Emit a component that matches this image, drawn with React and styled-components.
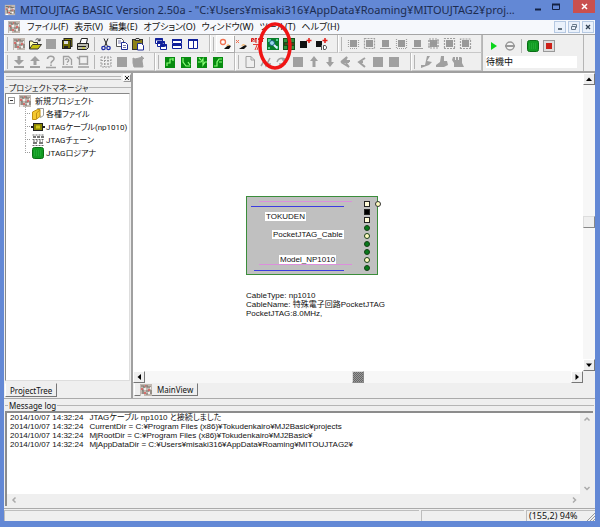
import React from "react";
import styled, { createGlobalStyle, css } from "styled-components";

const blue = "#6388d5";
const face = "#efefef";
const gothic = '"Liberation Sans", "Noto Sans CJK JP", sans-serif';
const ui = '"Noto Sans", "Noto Sans CJK JP", sans-serif';
const narrow = 'Roboto, "Noto Sans CJK JP", sans-serif';

const GlobalStyle = createGlobalStyle`
  *, *::before, *::after { box-sizing: border-box; }
  body { margin: 0; background: ${blue}; }
  button, input { font: inherit; color: inherit; border: 0; padding: 0; margin: 0; background: none; }
  ul, p { margin: 0; padding: 0; list-style: none; }
  svg { flex: none; }
`;

const Window = styled.div`
  display: flex;
  flex-direction: column;
  height: 100vh;
  min-height: 400px;
  padding: 0 5px 6px 4px;
  background: ${blue};
  color: #111;
  font-family: ${ui};
  font-size: 9px;
  font-feature-settings: "palt";
  position: relative;
  overflow: hidden;
`;

const TitleBar = styled.header`
  display: flex;
  align-items: center;
  height: 20px;
  flex: none;
`;
const Title = styled.h1`
  flex: 1;
  min-width: 0;
  margin: 0 0 0 4px;
  font-size: 11px;
  font-weight: 400;
  line-height: 20px;
  white-space: nowrap;
  overflow: hidden;
  color: #1c2c50;
`;
const CaptionButton = styled.button`
  align-self: flex-start;
  width: ${(p) => (p.$close ? 22 : 18)}px;
  height: 13px;
  margin-left: ${(p) => (p.$close ? 8 : 0)}px;
  display: grid;
  place-items: center;
  background: ${(p) => (p.$close ? "#c9504f" : "transparent")};
`;

const MenuBar = styled.nav`
  display: flex;
  align-items: center;
  height: 15px;
  flex: none;
  gap: 6px;
  padding: 0 1px 0 3px;
  background: #f6f8fc;
  border-bottom: 1px solid #a5a5a5;
`;
const MenuItem = styled.button`
  line-height: 14px;
  white-space: nowrap;
`;
const ChildButtons = styled.div`
  display: flex;
  gap: 2px;
  margin-left: auto;
`;
const ChildButton = styled.button`
  width: 12px;
  height: 12px;
  display: grid;
  place-items: center;
  background: #eaf1fb;
  border: 1px solid #b6c9e2;
`;

const ToolArea = styled.div`
  display: grid;
  grid-template-columns: auto 1fr;
  height: 38px;
  flex: none;
  background: ${face};
  border-bottom: 2px solid #a0a0a0;
`;
const ToolRows = styled.div`
  display: flex;
  flex-direction: column;
`;
const ToolRow = styled.div`
  display: flex;
  height: 18px;
`;
const ToolBar = styled.div`
  display: flex;
  align-items: center;
  flex: ${(p) => (p.$grow ? 1 : "none")};
  padding: 0 8px 0 6px;
  border-right: 1px solid #bdbdbd;
  border-bottom: 1px solid #c8c8c8;
  border-left: 1px solid #fff;
  background: linear-gradient(#b5b5b5, #b5b5b5) 2px 2px / 1px 14px no-repeat;
`;
const ToolButton = styled.button`
  width: 16px;
  height: ${(p) => (p.$raised ? 15 : 17)}px;
  display: grid;
  place-items: center;
  ${(p) =>
    p.$raised &&
    css`
      background: #f8f8f8;
      box-shadow: 0 0 0 1px #fff, 1px 1px 0 1px #aaa;
    `}
`;
const Separator = styled.span`
  width: 1px;
  height: 14px;
  margin: 0 3px;
  background: #b5b5b5;
`;
const RunBar = styled.div`
  display: flex;
  flex-direction: column;
  margin-right: 11px;
  padding-left: 3px;
  border-left: 1px solid #b5b5b5;
  border-right: 1px solid #b5b5b5;
`;
const RunButtons = styled.div`
  display: flex;
  height: 21px;
  align-items: center;
`;
const StateBox = styled.input`
  width: calc(100% - 6px);
  height: 12px;
  background: #fff;
  line-height: 12px;
`;

const Workspace = styled.main`
  display: grid;
  grid-template-columns: 128px minmax(0, 1fr);
  flex: 1;
  min-height: 0;
  background: ${face};
`;
const Dock = styled.aside`
  display: flex;
  flex-direction: column;
  min-height: 0;
  border-right: 1px solid #a0a0a0;
`;
const DockGrip = styled.div`
  display: flex;
  align-items: center;
  gap: 2px;
  height: 9px;
  flex: none;
  padding-left: 2px;
  &::before {
    content: "";
    flex: 1;
    height: 4px;
    border: 1px solid #b5b5b5;
    border-width: 1px 0;
  }
`;
const DockClose = styled.button`
  width: 8px;
  height: 8px;
  display: grid;
  place-items: center;
  border: 1px solid;
  border-color: #fff #999 #999 #fff;
`;
const GroupLabel = styled.h2`
  display: flex;
  align-items: center;
  gap: 1px;
  flex: none;
  margin: 0;
  padding-left: 1px;
  font-size: 8px;
  font-weight: 400;
  line-height: 11px;
  white-space: nowrap;
  &::before {
    content: "";
    width: 3px;
    height: 1px;
    background: #b5b5b5;
  }
  &::after {
    content: "";
    flex: 1;
    height: 1px;
    background: #b5b5b5;
  }
`;
const Tree = styled.ul`
  flex: 1;
  margin: 0 1px;
  padding: 0 2px;
  background: #fff;
  border: 1px solid;
  border-color: #888 #ddd #ddd #888;
  font-family: ${narrow};
  font-size: 8px;
  overflow: hidden;
`;
const TreeChildren = styled.ul`
  margin-left: 17px;
`;
const TreeRow = styled.li`
  display: flex;
  align-items: center;
  height: 13px;
  gap: ${(p) => (p.$child ? 1 : 3)}px;
  white-space: nowrap;
  ${(p) =>
    p.$child &&
    css`
      background: repeating-linear-gradient(#aaa 0 1px, transparent 1px 2px) 0 0 / 1px 100% no-repeat;
      &:last-child {
        background-size: 1px 7px;
      }
      &::before {
        content: "";
        flex: none;
        width: 5px;
        border-top: 1px dotted #999;
      }
    `}
`;
const Expander = styled.button`
  width: 7px;
  height: 7px;
  display: grid;
  place-items: center;
  border: 1px solid #999;
  background: #fff;
`;
const TabStrip = styled.div`
  display: flex;
  height: ${(p) => (p.$dock ? 17 : 15)}px;
  flex: none;
  padding: ${(p) => (p.$dock ? "2px 0 1px 1px" : "0 0 2px 1px")};
`;
const Tab = styled.button`
  display: flex;
  align-items: center;
  gap: 4px;
  padding: 0 4px;
  font-size: 8px;
  border: 1px solid;
  border-color: ${face} #777 #777 #fff;
`;

const View = styled.section`
  display: flex;
  flex-direction: column;
  min-width: 0;
  min-height: 0;
  border-left: 1px solid #a0a0a0;
`;
const ViewBody = styled.div`
  display: grid;
  grid-template-columns: minmax(0, 1fr) 12px;
  grid-template-rows: minmax(0, 1fr) 12px;
  flex: 1;
  min-height: 0;
`;
const Canvas = styled.div`
  position: relative;
  overflow: hidden;
  background: #fff;
  font-family: ${gothic};
  font-size: 8px;
  line-height: 9px;
`;
const Device = styled.div`
  position: absolute;
  left: 113px;
  top: 123px;
  width: 136px;
  height: 80px;
`;
const DeviceDrawing = styled.svg`
  display: block;
`;
const DeviceLabel = styled.span`
  position: absolute;
  left: ${(p) => p.$x}px;
  top: ${(p) => p.$y}px;
  padding: 0 1px;
  background: #fff;
  white-space: nowrap;
`;
const DeviceNotes = styled.p`
  position: absolute;
  left: 113px;
  top: 218px;
  white-space: pre;
`;

const Track = styled.div`
  display: flex;
  flex-direction: ${(p) => (p.$vertical ? "column" : "row")};
  justify-content: space-between;
  background: ${(p) => (p.$flat ? face : "#f7f7f7")};
`;
const ScrollButton = styled.button`
  width: ${(p) => (p.$flat ? 13 : 12)}px;
  height: 12px;
  display: grid;
  place-items: center;
  ${(p) =>
    !p.$flat &&
    css`
      background: ${face};
      border: 1px solid;
      border-color: #fff #777 #777 #fff;
    `}
`;
const Thumb = styled.div`
  width: 12px;
  height: 12px;
  background: ${(p) => (p.$dark ? "repeating-conic-gradient(#666 0 25%, #999 0 50%) 0 0 / 2px 2px" : face)};
  border: 1px solid;
  border-color: #ddd #888 #888 #ddd;
`;
const Corner = styled.div`
  background: ${face};
`;

const LogPanel = styled.section`
  display: flex;
  flex-direction: column;
  height: 110px;
  flex: none;
  padding: 1px 1px 2px 0;
  background: ${face};
  border-top: 1px solid #aaa;
`;
const LogFrame = styled.div`
  display: grid;
  grid-template-columns: minmax(0, 1fr) 13px;
  grid-template-rows: minmax(0, 1fr) 12px;
  flex: 1;
  margin: 0 1px;
  border: solid #8c8c8c;
  border-width: 2px 0 0 2px;
`;
const LogLines = styled.ul`
  overflow: hidden;
  padding-left: 3px;
  background: #fff;
  font-family: ${gothic};
  font-size: 8px;
  line-height: 9px;
  white-space: nowrap;
`;
const LogLine = styled.li`
  display: flex;
  gap: 6px;
`;

const StatusBar = styled.footer`
  display: flex;
  height: 13px;
  flex: none;
  gap: 2px;
  padding-top: 1px;
  background: ${face};
  border-top: 1px solid #aaa;
  line-height: 10px;
`;
const StatusCell = styled.div`
  flex: ${(p) => (p.$width ? `0 0 ${p.$width}px` : 1)};
  display: flex;
  justify-content: space-between;
  padding-left: 2px;
  border: 1px solid #bdbdbd;
  border-width: 1px 0 0 1px;
  white-space: nowrap;
`;
const Marker = styled.svg`
  position: absolute;
  left: 256px;
  top: 21px;
  pointer-events: none;
`;

const G = "#a0a0a0";
const green = (lines) => (
  <>
    <rect x="3" y="3" width="10" height="11" fill="#078b10" />
    <path d={lines} stroke="#8cff7a" strokeWidth="1.2" fill="none" />
  </>
);
const chip = (dash, gap) => (
  <>
    <rect x="5" y="4" width="7" height="7" fill="#999" />
    <path d={dash} stroke={G} strokeWidth="1.2" strokeDasharray={gap} fill="none" />
  </>
);

const icons = {
  app: (
    <>
      <rect x="2" y="2" width="12" height="12" fill="#c2b9b2" />
      <path d="M3 4h3v2M9 3v2h4M4 8h1v4M8 9h3M13 8v4M8 12h2" stroke="#77736a" fill="none" strokeWidth="1.2" />
      <path d="M3 7h2M7 4h1M10 8h2M6 11h2" stroke="#db5555" strokeWidth="1.4" />
      <path d="M6 7h2M10 11h2M12 6h1M3 13h3" stroke="#fff" strokeWidth="1.4" />
    </>
  ),
  open: (
    <>
      <path d="M2.500 13V5h3l1 1.500h4V9" fill="#ffffb0" stroke="#333" />
      <path d="M2.500 13L5.500 8.500h9L11 13z" fill="#c5c010" stroke="#333" />
      <path d="M8.500 4c2-2 3-1 4.500.5M13 2.500v2.300h-2.300" stroke="#333" fill="none" />
    </>
  ),
  square: <rect x="3" y="3" width="10" height="10" fill={G} />,
  saveAll: (
    <>
      <rect x="5" y="2.500" width="8" height="8" fill="#888200" stroke="#222" />
      <rect x="3.500" y="4.500" width="8" height="8" fill="#6c6800" stroke="#222" />
      <path d="M5 5h4v3H5z" fill="#ddd" />
      <path d="M5 10h4v2H5z" fill="#222" />
    </>
  ),
  print: (
    <>
      <path d="M5 7l1.500-4.500h6L11.500 7" fill="#fff" stroke="#222" />
      <path d="M2.500 7.500h11v4l-2 2h-9z" fill="#bcbcb0" stroke="#222" />
      <path d="M3 10.500h8" stroke="#222" />
      <path d="M7 12h3" stroke="#cc0" />
    </>
  ),
  cut: (
    <>
      <path d="M6 2.500l3.500 8M10 2.500l-3.500 8" stroke="#222" fill="none" />
      <circle cx="5.500" cy="12" r="1.700" fill="none" stroke="#1c2ba5" strokeWidth="1.300" />
      <circle cx="10.500" cy="12" r="1.700" fill="none" stroke="#1c2ba5" strokeWidth="1.300" />
    </>
  ),
  copy: (
    <>
      <path d="M2.500 2.500h5l2 2v6h-7z" fill="#fff" stroke="#555" />
      <path d="M7.500 6.500h4l2 2v5h-6z" fill="#fff" stroke="#1c2b95" />
      <path d="M4 5h3M4 7h3M9 9.500h3M9 11.500h3" stroke="#77a" />
    </>
  ),
  paste: (
    <>
      <rect x="2.500" y="3.500" width="10" height="10" fill="#8c8218" stroke="#333" />
      <path d="M5 4.500l1-2h3l1 2z" fill="#ddd" stroke="#333" />
      <path d="M7.500 7.500h4l2 2v4.500h-6z" fill="#fff" stroke="#1c2b95" />
    </>
  ),
  cascade: (
    <g fill="#fff" stroke="#10209a">
      <path d="M2.500 2.500h7v5h-7zM4.500 5.500h7v5h-7zM7.500 8.500h6v5h-6z" />
      <path d="M2 3.500h8M4 6.500h8M7 9.500h7" strokeWidth="2" />
    </g>
  ),
  tileH: (
    <g fill="#fff" stroke="#10209a">
      <path d="M3.500 3.500h9v4h-9zM3.500 8.500h9v4h-9z" />
      <path d="M3 4h10M3 9h10" strokeWidth="2" />
    </g>
  ),
  tileV: (
    <g fill="#fff" stroke="#10209a">
      <path d="M3.500 3.500h5v9h-5zM8.500 3.500h4v9h-4z" />
      <path d="M3 4h10" strokeWidth="2" />
    </g>
  ),
  probe: (
    <>
      <circle cx="6" cy="6" r="2.500" stroke="#f07050" strokeWidth="1.300" fill="#fff" />
      <path d="M7 13l2-2 3-2 2 1-2 3H8z" fill="#111" />
      <path d="M9 10l2-2 2 1.500z" fill="#f6b060" />
    </>
  ),
  unprobe: (
    <>
      <path d="M3 4l3 3M6 4L3 7" stroke="#f07050" />
      <path d="M6 13l3-2 3-2 2 1-3 3H7z" fill="#111" />
      <path d="M8 10l2-2 3 1z" fill="#f6b060" />
    </>
  ),
  reset: (
    <>
      <path d="M2.500 6V2.500h2V4h-2l2 2M8 2.500H6V6h2M6 4h2M11.500 2.500H9.500V4h2v2H9.500M12 2.500h3M13.500 2.500V6" stroke="#d51b18" fill="none" />
      <path d="M4 8.500h8M8 9l-2 5M10 9l-2 5" stroke="#e04038" fill="none" />
    </>
  ),
  chain: (
    <>
      <rect x="2" y="2" width="12" height="12" fill="#087d2a" />
      <path d="M3 3h3v3H3zM11 3h2v2h-2zM3 11h2v2H3zM11 10h2v3h-2z" fill="#57ce9c" />
      <path d="M6 6l6 6" stroke="#deefff" strokeWidth="2" />
      <circle cx="7" cy="7" r="2.500" fill="#9cd9ee" stroke="#175e80" />
    </>
  ),
  chainGrid: (
    <>
      <rect x="2" y="2" width="12" height="12" fill="#164d18" />
      <path d="M3 3h3v3H3zM10 3h3v3h-3zM3 10h3v3H3zM10 10h3v3h-3z" fill="#31943b" />
      <path d="M8 4v9M4 8h9" stroke="#8e3a1b" />
    </>
  ),
  addPart: (
    <>
      <rect x="3" y="5" width="7" height="7" fill="#111" />
      <path d="M12 2v5M9.500 4.500h5" stroke="#e41b16" strokeWidth="1.500" />
    </>
  ),
  addPartId: (
    <>
      <rect x="3" y="5" width="6" height="6" fill="#111" />
      <path d="M12 2v5M9.500 4.500h5" stroke="#e41b16" strokeWidth="1.500" />
      <path d="M8.500 9v5M10.500 9.500h2l1 1.500v1l-1 1.500h-2z" stroke="#555" fill="#fff" />
    </>
  ),
  chip1: chip("M5 12.500h7M3.500 4v8M13.500 4v8", "1 1"),
  chip2: chip("M3.500 2.500h10v10h-10z", "2 1"),
  chip3: chip("M3 12.500h11", "4 0"),
  chip4: chip("M3.500 3v9.500h10V3", "1 1"),
  chip5: chip("M3 12.500h11", "5 0"),
  chip6: chip("M4 3h9v9H4zM3 5h11M3 10h11", "2 1"),
  chip7: chip("M3.500 12V2.500h10V12M3 12.500h11", "2 1"),
  chip8: chip("M3.500 13V3h10v10M3 12.500h11", "2 1"),
  down: <path d="M6.500 2h3v4H13l-5 5-5-5h3.500zM3 12h10v2H3z" fill={G} />,
  up: <path d="M8 2l5 5H9.500v4h-3V7H3zM3 12h10v2H3z" fill={G} />,
  ask: (
    <path d="M4.500 5c0-4 7-3.500 6.500 0-.3 2-3 2-3 4.500M8 10.500v1.500M3 13.500h10" fill="none" stroke={G} strokeWidth="1.600" />
  ),
  pageAsk: (
    <path d="M4.500 11V2.500h5l3 3V11M6.500 6c1-2 4-1 3 1L8 8.500M8 10v1M3 13h11" fill="none" stroke={G} strokeWidth="1.300" />
  ),
  pageUp: <path d="M4.500 11V2.500h8V11M4 5l-2-2M3 13h11M5 10h7" fill="none" stroke={G} strokeWidth="1.400" />,
  grid: <path d="M3 3h10v10H3zM3 6.500h10M3 10h10M6.500 3v10M10 3v10" fill="none" stroke={G} strokeDasharray="2 1" />,
  brush: <path d="M3 4l2 1 8-2-1 4 1 6H4L3 9zM11 2l3 3" fill={G} stroke={G} />,
  wave1: green("M5 12V9h3V5h3M11 4v3"),
  wave2: green("M5 4v4l3 4h4M10 8l2 3"),
  wave3: green("M4 8h3l2-3v6l2-3h2M5 4l2 2"),
  wave4: green("M4 12h3V8l2-3h3M9 8h3"),
  page: <path d="M4 2.500h5l3.500 3.500v7.500H4zM9 2.500V6h3.500" fill="none" stroke={G} />,
  tools: <path d="M3 12l3-5 2 5 4-8M4 4l3 3M9 10h4" fill="none" stroke={G} strokeWidth="1.500" />,
  wand: <path d="M3 8c2-5 8-5 9 0M8 5l3 3-4 5M5 10h7" fill="none" stroke={G} strokeWidth="1.500" />,
  arrowUp: <path d="M8 2l4 5H9.500v6h-3V7H4z" fill={G} />,
  arrowDown: <path d="M8 13l4-5H9.500V3h-3v5H4z" fill={G} />,
  zoomIn: <path d="M3 8l6-5-2 4h5M3 8l8 5-3-4M5 8h6" fill="none" stroke={G} strokeWidth="1.800" />,
  zoomOut: <path d="M11 4L5 8l6 5M6 8h3" fill="none" stroke={G} strokeWidth="2" />,
  mic: <path d="M9 2h3L9 7l5 1-3 3-8 3v-3h4z" fill={G} />,
  hand: <path d="M7 2h3v5h3l1 4-4 2H2v-2l4-3z" fill={G} />,
  hands: <path d="M3 3h2v3h1V3h2v3h1V3h2l1 1v5l2 4H4V9L2 6z" fill={G} />,
  play: <path d="M5 4l6 4-6 4z" fill="#0bd51b" />,
  halt: (
    <>
      <circle cx="8" cy="8" r="4" fill="#f3f3f3" stroke="#999" strokeWidth="1.500" />
      <path d="M3 7h10v2H3z" fill="#999" />
    </>
  ),
  analyzer: (
    <>
      <rect x="2.500" y="2.500" width="11" height="11" rx="2" fill="#129b23" stroke="#0a6e16" />
      <path d="M4 6h8M4 8h8M4 10h8" stroke="#2fb842" strokeDasharray="1 1" />
    </>
  ),
  record: (
    <>
      <rect x="2.500" y="2.500" width="11" height="11" fill="#ddd" stroke="#999" />
      <rect x="5" y="5" width="6" height="6" fill="#cc2018" />
    </>
  ),
  files: (
    <>
      <path d="M7.500 2.500h6v7l-3 2z" fill="#fff" stroke="#999" />
      <path d="M2.500 6l5-2.500h2.500v7l-4 3H2.500z" fill="#f5c830" stroke="#c08f15" />
      <path d="M6.500 13V7l3.500-3" fill="none" stroke="#c08f15" />
    </>
  ),
  cable: (
    <>
      <path d="M1 8h14" stroke="#222" strokeWidth="2" />
      <rect x="3.500" y="4.500" width="9" height="7" fill="#8b8500" stroke="#222" />
      <rect x="6" y="6.500" width="4" height="3" fill="#d0c71b" />
    </>
  ),
  parts: (
    <>
      <path d="M3 4h3v2H3zM7 4h3v2H7zM11 4h3v2h-3zM3 10h4v2H3zM9 10h4v2H9z" fill="#777" />
      <path d="M2.500 7.500h11M2.500 13.500h11M2.500 3h11M3 9h10" stroke="#666" strokeDasharray="2 1" />
    </>
  ),
};

const Icon = ({ name, size = 16 }) => (
  <svg width={size} height={size} viewBox={size < 16 ? "1 1 14 14" : "0 0 16 16"} aria-hidden="true">
    {icons[name]}
  </svg>
);

const Tools = ({ items, grow }) => (
  <ToolBar $grow={grow}>
    {items.map(([name, label, raised], i) =>
      name === "|" ? (
        <Separator key={i} />
      ) : (
        <ToolButton key={i} aria-label={label} $raised={raised}>
          <Icon name={name} />
        </ToolButton>
      )
    )}
  </ToolBar>
);

const fileTools = [
  ["app", "新規プロジェクト"], ["open", "開く"], ["square", "保存"], ["saveAll", "すべて保存"], ["print", "印刷"], ["|"],
  ["cut", "切り取り"], ["copy", "コピー"], ["paste", "貼り付け"], ["|"],
  ["cascade", "重ねて表示"], ["tileH", "上下に並べる"], ["tileV", "左右に並べる"],
];
const jtagTools = [
  ["probe", "接続", true], ["unprobe", "切断"], ["reset", "リセット"], ["chain", "自動認識"], ["chainGrid", "チェーン"],
  ["addPart", "部品追加"], ["addPartId", "ID追加"],
];
const chipTools = [1, 2, 3, 4, 5, 6, 7, 8].map((n) => [`chip${n}`, `デバイス ${n}`]);
const deviceTools = [
  ["down", "書き込み"], ["up", "読み出し"], ["ask", "照合"], ["pageAsk", "確認"], ["pageUp", "消去"], ["|"],
  ["grid", "グリッド"], ["square", "塗り"], ["brush", "ブラシ"],
];
const waveTools = [["wave1", "波形 1"], ["wave2", "波形 2"], ["wave3", "波形 3"], ["wave4", "波形 4"]];
const editTools = [
  ["page", "新規"], ["tools", "設定"], ["wand", "変換"], ["square", "停止"], ["arrowUp", "上へ"], ["arrowDown", "下へ"],
  ["zoomIn", "拡大"], ["zoomOut", "縮小"], ["square", "領域 1"], ["square", "領域 2"],
];
const handTools = [["mic", "移動"], ["hand", "選択"], ["hands", "保持"]];

const menus = ["ファイル(F)", "表示(V)", "編集(E)", "オプション(O)", "ウィンドウ(W)", "ツール(T)", "ヘルプ(H)"];

const treeItems = [
  ["files", "各種ファイル"],
  ["cable", "JTAGケーブル(np1010)"],
  ["parts", "JTAGチェーン"],
  ["analyzer", "JTAGロジアナ"],
];

const messages = [
  "JTAGケーブル np1010 と接続しました",
  "CurrentDir = C:¥Program Files (x86)¥Tokudenkairo¥MJ2Basic¥projects",
  "MjRootDir = C:¥Program Files (x86)¥Tokudenkairo¥MJ2Basic¥",
  "MjAppDataDir = C:¥Users¥misaki316¥AppData¥Roaming¥MITOUJTAG2¥",
];

const arrows = {
  up: "M4 2.500L7 6H1z",
  down: "M4 6L1 2.500h6z",
  left: "M2.500 4L6 1v6z",
  right: "M6 4L2.500 1v6z",
};
const chevrons = {
  up: "M1.500 5.500L4 3l2.500 2.500",
  down: "M1.500 3L4 5.500 6.500 3",
  left: "M5.500 1.500L3 4l2.500 2.500",
  right: "M3 1.500L5.500 4 3 6.500",
};
const Scroll = ({ dir, flat }) => (
  <ScrollButton aria-label={`scroll ${dir}`} $flat={flat}>
    <svg width="8" height="8">
      {flat ? (
        <path d={chevrons[dir]} fill="none" stroke="#aaa" strokeWidth="1.500" />
      ) : (
        <path d={arrows[dir]} fill="#000" />
      )}
    </svg>
  </ScrollButton>
);

const pins = ["#fffbd8", "#000", "#fffbd8", "#087a1c", "#fffbc0", "#087a1c", "#087a1c", "#fffbc0", "#087a1c"];

export default function App() {
  return (
    <Window>
      <GlobalStyle />
      <TitleBar>
        <Icon name="app" size={12} />
        <Title>MITOUJTAG BASIC Version 2.50a - "C:¥Users¥misaki316¥AppData¥Roaming¥MITOUJTAG2¥proj...</Title>
        <CaptionButton aria-label="最小化">
          <svg width="8" height="9"><path d="M1 7.500h6" stroke="#142244" strokeWidth="2" /></svg>
        </CaptionButton>
        <CaptionButton aria-label="最大化">
          <svg width="8" height="8"><path d="M.5 1.500h7v5h-7z" fill="none" stroke="#142244" /><path d="M0 1.500h8" stroke="#142244" strokeWidth="2" /></svg>
        </CaptionButton>
        <CaptionButton aria-label="閉じる" $close>
          <svg width="7" height="7"><path d="M1 1l5 5M6 1L1 6" stroke="#fff" strokeWidth="1.500" /></svg>
        </CaptionButton>
      </TitleBar>

      <MenuBar>
        <Icon name="app" size={14} />
        {menus.map((m) => <MenuItem key={m}>{m}</MenuItem>)}
        <ChildButtons>
          <ChildButton aria-label="子ウィンドウを最小化">
            <svg width="8" height="8"><path d="M2 6h4" stroke="#345" strokeWidth="1.500" /></svg>
          </ChildButton>
          <ChildButton aria-label="元に戻す">
            <svg width="8" height="8"><path d="M2.500 2.500v-1h4v3h-1M1.500 3.500h4v3h-4z" fill="none" stroke="#678" /></svg>
          </ChildButton>
          <ChildButton aria-label="子ウィンドウを閉じる">
            <svg width="8" height="8"><path d="M2 2l4 4M6 2L2 6" stroke="#345" strokeWidth="1.300" /></svg>
          </ChildButton>
        </ChildButtons>
      </MenuBar>

      <ToolArea>
        <ToolRows>
          <ToolRow>
            <Tools items={fileTools} />
            <Tools items={jtagTools} />
            <Tools items={chipTools} grow />
          </ToolRow>
          <ToolRow>
            <Tools items={deviceTools} />
            <Tools items={waveTools} />
            <Tools items={editTools} />
            <Tools items={handTools} grow />
          </ToolRow>
        </ToolRows>
        <RunBar>
          <RunButtons>
            <ToolButton aria-label="実行"><Icon name="play" /></ToolButton>
            <ToolButton aria-label="停止"><Icon name="halt" /></ToolButton>
            <Separator />
            <ToolButton aria-label="ロジアナ"><Icon name="analyzer" /></ToolButton>
            <ToolButton aria-label="記録"><Icon name="record" /></ToolButton>
          </RunButtons>
          <StateBox aria-label="状態" readOnly value="待機中" />
        </RunBar>
      </ToolArea>

      <Workspace>
        <Dock>
          <DockGrip>
            <DockClose aria-label="パネルを閉じる">
              <svg width="6" height="6"><path d="M1 1l4 4M5 1L1 5" stroke="#222" /></svg>
            </DockClose>
          </DockGrip>
          <GroupLabel>プロジェクトマネージャ</GroupLabel>
          <Tree>
            <TreeRow>
              <Expander aria-label="折りたたむ">
                <svg width="5" height="5"><path d="M1 2.500h3" stroke="#333" /></svg>
              </Expander>
              <Icon name="app" size={14} />
              新規プロジェクト
            </TreeRow>
            <li>
              <TreeChildren>
                {treeItems.map(([icon, label]) => (
                  <TreeRow key={label} $child>
                    <Icon name={icon} size={14} />
                    {label}
                  </TreeRow>
                ))}
              </TreeChildren>
            </li>
          </Tree>
          <TabStrip $dock><Tab>ProjectTree</Tab></TabStrip>
        </Dock>

        <View>
          <ViewBody>
            <Canvas>
              <Device>
                <DeviceDrawing width="136" height="80">
                  <rect x="0.5" y="0.5" width="131" height="78" fill="#c0c0c0" stroke="#3b8d3b" />
                  <path d="M13 5.500h93M13 68.500h93" stroke="#dc8fdc" />
                  <path d="M5 10.500h93M8 74.500h90" stroke="#3c3ce0" />
                  {pins.map((fill, i) =>
                    i < 3 ? (
                      <rect key={i} x="118.500" y={5.5 + i * 8} width="5" height="5" fill={fill} stroke="#222" />
                    ) : (
                      <circle key={i} cx="121" cy={8 + i * 8} r="2.500" fill={fill} stroke="#153d15" />
                    )
                  )}
                  <circle cx="132" cy="8" r="2.500" fill="#fffbc0" stroke="#333" />
                </DeviceDrawing>
                <DeviceLabel $x={19} $y={16}>TOKUDEN</DeviceLabel>
                <DeviceLabel $x={26} $y={34}>PocketJTAG_Cable</DeviceLabel>
                <DeviceLabel $x={33} $y={59}>Model_NP1010</DeviceLabel>
              </Device>
              <DeviceNotes>{"CableType: np1010\nCableName: 特殊電子回路PocketJTAG\nPocketJTAG:8.0MHz,"}</DeviceNotes>
            </Canvas>
            <Track $vertical>
              <Scroll dir="up" />
              <Thumb />
              <Scroll dir="down" />
            </Track>
            <Track>
              <Scroll dir="left" />
              <Thumb $dark />
              <Scroll dir="right" />
            </Track>
            <Corner />
          </ViewBody>
          <TabStrip>
            <Tab><Icon name="app" size={14} />MainView</Tab>
          </TabStrip>
        </View>
      </Workspace>

      <LogPanel>
        <GroupLabel>Message log</GroupLabel>
        <LogFrame>
          <LogLines>
            {messages.map((m) => (
              <LogLine key={m}><time>2014/10/07 14:32:24</time><span>{m}</span></LogLine>
            ))}
          </LogLines>
          <Track $vertical $flat>
            <Scroll dir="up" flat />
            <Scroll dir="down" flat />
          </Track>
          <Track $flat>
            <Scroll dir="left" flat />
            <Scroll dir="right" flat />
          </Track>
          <Corner />
        </LogFrame>
      </LogPanel>

      <StatusBar>
        <StatusCell />
        <StatusCell $width={103} />
        <StatusCell $width={69}>
          (155,2) 94%
          <svg width="9" height="10"><path d="M1 10l8-8M4 10l5-5M7 10l2-2" stroke="#999" /></svg>
        </StatusCell>
      </StatusBar>

      <Marker width="38" height="50" aria-hidden="true">
        <ellipse cx="19" cy="25" rx="15" ry="22" fill="none" stroke="#f01414" strokeWidth="3.500" />
      </Marker>
    </Window>
  );
}
